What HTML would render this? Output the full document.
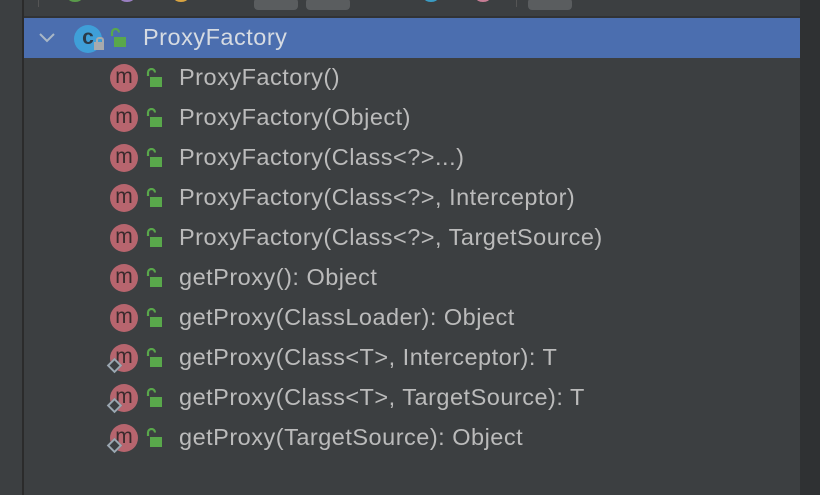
<!DOCTYPE html>
<html><head><style>
body{margin:0;width:820px;height:495px;background:#3c3f41;position:relative;overflow:hidden;font-family:"Liberation Sans","DejaVu Sans",sans-serif;}
.l{position:absolute;left:0;top:0;width:22px;height:495px;background:#3c3f41;border-right:2px solid #2b2b2b;}
.r{position:absolute;left:800px;top:0;width:20px;height:495px;background:#2f3133;}
.tb{position:absolute;left:24px;top:0;width:776px;height:16px;background:#3c3f41;border-bottom:2px solid #313335;}
.sel{position:absolute;left:24px;top:18px;width:776px;height:40px;background:#4b6eaf;}
.row{position:absolute;left:0;height:40px;width:800px;}
.t{position:absolute;left:179px;top:6px;font-size:23.5px;letter-spacing:0.5px;color:#bbbbbb;white-space:nowrap;}
.m{position:absolute;left:110px;top:6px;width:28px;height:28px;border-radius:50%;background:#b7656e;color:#3a2a2c;font-size:21px;line-height:25px;text-align:center;}
.lk{position:absolute;left:144px;top:10px;}
.d{position:absolute;left:109px;top:22px;width:7px;height:7px;border:2px solid #9aa7b0;transform:rotate(45deg);background:#3c3f41;}
</style></head><body>
<div class="l"></div><div class="r"></div>
<div class="tb">
<div style="position:absolute;left:14px;top:0;width:1px;height:7px;background:#555"></div>
<div style="position:absolute;left:44px;top:-6px;width:14px;height:8px;border-radius:50%;background:#5a9b4b"></div>
<div style="position:absolute;left:96px;top:-6px;width:14px;height:8px;border-radius:50%;background:#9a7fc2"></div>
<div style="position:absolute;left:230px;top:-2px;width:44px;height:12px;border-radius:4px;background:#5a5d5f"></div>
<div style="position:absolute;left:282px;top:-2px;width:44px;height:12px;border-radius:4px;background:#5a5d5f"></div>
<div style="position:absolute;left:150px;top:-6px;width:14px;height:8px;border-radius:50%;background:#d9a441"></div>
<div style="position:absolute;left:400px;top:-6px;width:14px;height:8px;border-radius:50%;background:#3a9cc4"></div>
<div style="position:absolute;left:452px;top:-6px;width:14px;height:8px;border-radius:50%;background:#c77d95"></div>
<div style="position:absolute;left:492px;top:0;width:1px;height:7px;background:#555"></div>
<div style="position:absolute;left:504px;top:-2px;width:44px;height:12px;border-radius:4px;background:#5a5d5f"></div>
</div>
<div class="sel"></div>
<div class="row" style="top:18px">
<svg style="position:absolute;left:38px;top:14px" width="18" height="12"><path d="M2 2 L9 9 L16 2" stroke="#a9b7c6" stroke-width="2" fill="none"/></svg>
<div style="position:absolute;left:74px;top:7px;width:28px;height:28px;border-radius:50%;background:#3f9fd8;color:#2b3a48;font-size:21px;line-height:26px;text-align:center;font-weight:bold">c</div>
<div style="position:absolute;left:94px;top:24px;width:10px;height:8px;background:#a7aaad"></div>
<div style="position:absolute;left:96px;top:19px;width:4px;height:6px;border:2px solid #a7aaad;border-bottom:none;border-radius:3px 3px 0 0"></div>
<svg class="lk" style="left:108px" width="20" height="20"><path d="M4 8 V4.5 a3.5 3.5 0 0 1 7 0" stroke="#59a84b" stroke-width="2.2" fill="none"/><rect x="6" y="9" width="12" height="10" fill="#59a84b"/></svg>
<div class="t" style="left:143px;color:#d6dbe2">ProxyFactory</div>
</div>
<div id="rows"></div>
<script>
var items=["ProxyFactory()","ProxyFactory(Object)","ProxyFactory(Class&lt;?&gt;...)","ProxyFactory(Class&lt;?&gt;, Interceptor)","ProxyFactory(Class&lt;?&gt;, TargetSource)","getProxy(): Object","getProxy(ClassLoader): Object","getProxy(Class&lt;T&gt;, Interceptor): T","getProxy(Class&lt;T&gt;, TargetSource): T","getProxy(TargetSource): Object"];
var h="";
items.forEach(function(s,i){
h+='<div class="row" style="top:'+(58+i*40)+'px"><div class="m">m</div>'+(i>=7?'<div class="d"></div>':'')+
'<svg class="lk" width="20" height="20"><path d="M4 8 V4.5 a3.5 3.5 0 0 1 7 0" stroke="#59a84b" stroke-width="2.2" fill="none"/><rect x="6" y="9" width="12" height="10" fill="#59a84b"/></svg><div class="t">'+s+'</div></div>';
});
document.getElementById("rows").innerHTML=h;
</script>
</body></html>
